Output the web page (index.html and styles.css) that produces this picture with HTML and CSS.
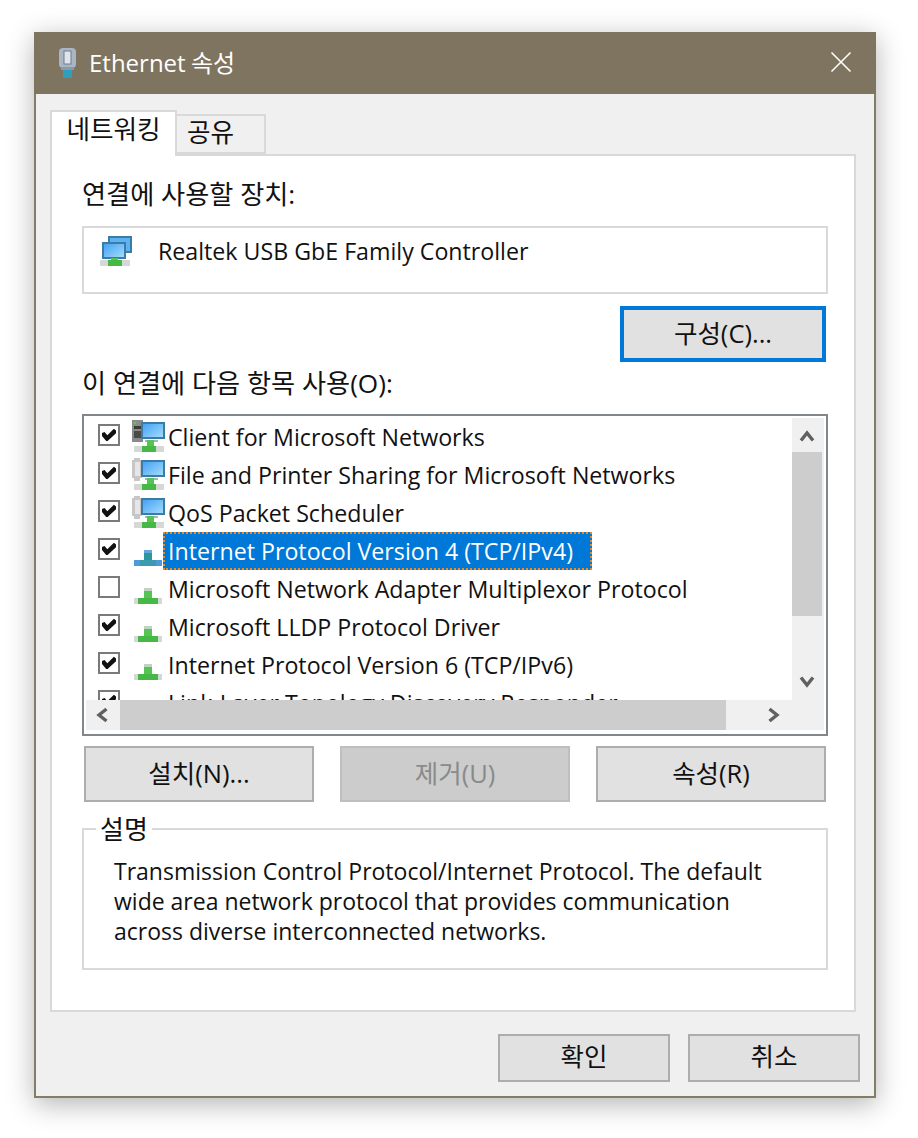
FILE: index.html
```html
<!DOCTYPE html>
<html lang="ko">
<head>
  <meta charset="UTF-8" />
  <title>Ethernet 속성</title>
  <link rel="stylesheet" href="styles.css">
</head>
<body>
  <svg class="defs" width="0" height="0">
    <defs>
      <linearGradient id="screen" x1="0" y1="0" x2="1" y2="1">
        <stop offset="0" stop-color="#3f9ff4"/>
        <stop offset="1" stop-color="#a8defb"/>
      </linearGradient>
      <g id="proto">
        <rect x="2" y="24" width="28" height="6" fill="#d6d8d6"/>
        <rect x="6" y="24" width="20" height="6" fill="#45b845"/>
        <rect x="12" y="14" width="8" height="10" fill="#55c455"/>
        <rect x="12" y="14" width="8" height="3" fill="#c3d3c3"/>
      </g>
      <g id="monitor">
        <rect x="10" y="1" width="22" height="15" fill="url(#screen)" stroke="#3a7ca5" stroke-width="2"/>
        <rect x="13" y="18" width="13" height="2" fill="#a9b4bb"/>
        <rect x="2" y="24" width="30" height="6" fill="#d6d8d6"/>
        <rect x="10" y="24" width="14" height="6" fill="#45b845"/>
        <rect x="15" y="18" width="7" height="6" fill="#55c455"/>
      </g>
      <g id="gear">
        <path d="M2 -2h6v2h2v18H8v3H2v-3H0V0h2z" fill="#c6c6c6"/>
        <path d="M3 2h5v14H3z" fill="#e6e6e6"/>
      </g>
      <g id="pc">
        <rect x="0" y="-2" width="11" height="22" fill="#8a8a8a"/>
        <rect x="2" y="0" width="2" height="2" fill="#52d052"/>
        <rect x="2" y="4" width="7" height="3" fill="#3a3a3a"/>
        <rect x="2" y="9" width="7" height="7" fill="#4a4a4a"/>
      </g>
    </defs>
  </svg>

  <div class="window">
    <div class="titlebar">
      <svg class="title-icon" width="17" height="30" viewBox="0 0 17 30">
        <rect x="0" y="0" width="17" height="20" rx="4" fill="#aab6c6"/>
        <rect x="5" y="3" width="7" height="13" fill="#dfe5ea" stroke="#6f7c8c" stroke-width="1"/>
        <rect x="2" y="19" width="13" height="3" fill="#8e99a6"/>
        <rect x="4" y="22" width="9" height="8" fill="#2f9fc0"/>
      </svg>
      <span class="title-text">Ethernet 속성</span>
      <svg class="close-icon" width="20" height="20" viewBox="0 0 20 20">
        <path d="M0.5 0.5L19.5 19.5M19.5 0.5L0.5 19.5" stroke="#ffffff" stroke-width="1.6" fill="none"/>
      </svg>
    </div>

    <div class="content">
      <div class="tabs">
        <div class="tab tab-active">네트워킹</div>
        <div class="tab">공유</div>
      </div>

      <div class="panel">
        <div class="label label-device">연결에 사용할 장치:</div>
        <div class="device-box">
          <svg class="device-icon" width="32" height="30" viewBox="0 0 32 30">
            <rect x="9" y="1" width="22" height="15" fill="#5fb2f2" stroke="#3a7ca5" stroke-width="2"/>
            <rect x="3" y="7" width="22" height="15" fill="url(#screen)" stroke="#3a7ca5" stroke-width="2"/>
            <rect x="0" y="24" width="30" height="6" fill="#d6d8d6"/>
            <rect x="8" y="24" width="14" height="6" fill="#45b845"/>
            <rect x="11" y="22" width="7" height="2" fill="#55c455"/>
          </svg>
          <span>Realtek USB GbE Family Controller</span>
        </div>

        <div class="config-row">
          <button class="btn btn-config">구성(C)...</button>
        </div>

        <div class="label label-items">이 연결에 다음 항목 사용(O):</div>

        <div class="listbox">
          <div class="list-main">
            <ul class="list-items">
              <li class="item">
                <span class="check on"></span>
                <svg class="item-icon" width="32" height="30" viewBox="0 0 32 30"><use href="#pc"/><use href="#monitor"/></svg>
                <span class="item-text">Client for Microsoft Networks</span>
              </li>
              <li class="item">
                <span class="check on"></span>
                <svg class="item-icon" width="32" height="30" viewBox="0 0 32 30"><use href="#gear"/><use href="#monitor"/></svg>
                <span class="item-text">File and Printer Sharing for Microsoft Networks</span>
              </li>
              <li class="item">
                <span class="check on"></span>
                <svg class="item-icon" width="32" height="30" viewBox="0 0 32 30"><use href="#gear"/><use href="#monitor"/></svg>
                <span class="item-text">QoS Packet Scheduler</span>
              </li>
              <li class="item">
                <span class="check on"></span>
                <svg class="item-icon" width="32" height="30" viewBox="0 0 32 30">
                  <rect x="2" y="24" width="28" height="6" fill="#3d9bb0"/>
                  <rect x="2" y="24" width="6" height="6" fill="#4f9ad8"/>
                  <rect x="24" y="24" width="6" height="6" fill="#4f9ad8"/>
                  <rect x="12" y="14" width="8" height="10" fill="#2c95a0"/>
                  <rect x="12" y="14" width="8" height="3" fill="#62a8d8"/>
                </svg>
                <span class="item-text selected">Internet Protocol Version 4 (TCP/IPv4)</span>
              </li>
              <li class="item">
                <span class="check"></span>
                <svg class="item-icon" width="32" height="30" viewBox="0 0 32 30"><use href="#proto"/></svg>
                <span class="item-text">Microsoft Network Adapter Multiplexor Protocol</span>
              </li>
              <li class="item">
                <span class="check on"></span>
                <svg class="item-icon" width="32" height="30" viewBox="0 0 32 30"><use href="#proto"/></svg>
                <span class="item-text">Microsoft LLDP Protocol Driver</span>
              </li>
              <li class="item">
                <span class="check on"></span>
                <svg class="item-icon" width="32" height="30" viewBox="0 0 32 30"><use href="#proto"/></svg>
                <span class="item-text">Internet Protocol Version 6 (TCP/IPv6)</span>
              </li>
              <li class="item">
                <span class="check on"></span>
                <svg class="item-icon" width="32" height="30" viewBox="0 0 32 30"><use href="#proto"/></svg>
                <span class="item-text">Link-Layer Topology Discovery Responder</span>
              </li>
            </ul>
            <div class="vscroll">
              <svg class="arrow arrow-up" width="14" height="12" viewBox="0 0 14 12"><path d="M1 10.5L7 3l6 7.5" fill="none" stroke="#606060" stroke-width="3.4"/></svg>
              <div class="vthumb"></div>
              <svg class="arrow arrow-down" width="14" height="12" viewBox="0 0 14 12"><path d="M1 1.5L7 9l6-7.5" fill="none" stroke="#606060" stroke-width="3.4"/></svg>
            </div>
          </div>
          <div class="hscroll">
            <svg class="arrow-left" width="12" height="14" viewBox="0 0 12 14"><path d="M10.5 1L3 7l7.5 6" fill="none" stroke="#606060" stroke-width="3.4"/></svg>
            <div class="hthumb"></div>
            <svg class="arrow-right" width="12" height="14" viewBox="0 0 12 14"><path d="M1.5 1L9 7l-7.5 6" fill="none" stroke="#606060" stroke-width="3.4"/></svg>
          </div>
        </div>

        <div class="btn-row">
          <button class="btn">설치(N)...</button>
          <button class="btn btn-disabled">제거(U)</button>
          <button class="btn">속성(R)</button>
        </div>

        <fieldset class="desc">
          <legend>설명</legend>
          <p>Transmission Control Protocol/Internet Protocol. The default wide area network protocol that provides communication across diverse interconnected networks.</p>
        </fieldset>
      </div>

      <div class="footer">
        <button class="btn btn-footer">확인</button>
        <button class="btn btn-footer">취소</button>
      </div>
    </div>
  </div>
</body>
</html>
```

FILE: styles.css
```css
* {
  box-sizing: border-box;
}
html, body {
  height: 100%;
}
body {
  margin: 0;
  padding: 32px 42px 40px 34px;
  background: #ffffff;
  font-family: "Open Sans", "Noto Sans CJK KR", sans-serif;
  font-size: 23.2px;
  color: #111111;
  overflow: hidden;
}
svg {
  overflow: visible;
}
.defs {
  display: block;
  height: 0;
}
.window {
  width: 842px;
  height: 1066px;
  border: 2px solid #857c68;
  border-top: 0;
  background: #f0f0f0;
  box-shadow: 0 6px 26px rgba(0, 0, 0, 0.3);
}
.titlebar {
  display: flex;
  align-items: center;
  height: 62px;
  margin: 0 -2px;
  padding: 0 25px 0 25px;
  background: #7f745f;
  color: #ffffff;
}
.title-icon {
  margin-right: 13px;
}
.title-text {
  flex: 1;
  font-size: 24px;
  word-spacing: -1px;
  line-height: 1;
}
.close-icon {
  display: block;
  margin-top: -2px;
}
.content {
  padding: 16px 18px 0 14px;
}
.tabs {
  display: flex;
  align-items: flex-end;
  height: 44px;
  position: relative;
  z-index: 1;
}
.tab {
  width: 89px;
  height: 40px;
  padding-left: 10px;
  border: 2px solid #d9d9d9;
  border-left: 0;
  background: #f0f0f0;
  font-size: 25.6px;
  line-height: 34px;
}
.tab-active {
  width: 127px;
  height: 46px;
  padding-left: 0;
  border: 2px solid #d9d9d9;
  border-bottom: 0;
  background: #ffffff;
  text-align: center;
  line-height: 36px;
  margin-bottom: -2px;
}
.panel {
  height: 858px;
  padding: 0 26px 0 30px;
  background: #ffffff;
  border: 2px solid #d9d9d9;
}
.label {
  font-size: 26.2px;
  line-height: 32px;
  white-space: nowrap;
}
.label-device {
  padding-top: 22px;
  height: 70px;
}
.device-box {
  display: flex;
  align-items: center;
  width: 746px;
  height: 68px;
  margin-bottom: 12px;
  padding: 0 0 18px 16px;
  border: 2px solid #d9d9d9;
}
.device-icon {
  margin-right: 26px;
}
.config-row {
  display: flex;
  justify-content: flex-end;
  height: 56px;
  padding-right: 2px;
}
.btn {
  height: 56px;
  width: 230px;
  border: 2px solid #adadad;
  background: #e1e1e1;
  font-family: inherit;
  font-size: 25.5px;
  color: #111111;
  padding: 0 0 6px;
}
.btn-config {
  width: 206px;
  padding-bottom: 6px;
  border: 4px solid #0078d7;
}
.btn-disabled {
  background: #cccccc;
  border-color: #bfbfbf;
  color: #8a8a8a;
}
.label-items {
  padding-top: 5px;
  height: 52px;
}
.listbox {
  width: 746px;
  height: 322px;
  border: 2px solid #82878b;
  padding: 2px;
}
.list-main {
  display: flex;
  height: 282px;
}
.list-items {
  flex: 1;
  margin: 0;
  padding: 0;
  list-style: none;
  overflow: hidden;
}
.item {
  display: flex;
  align-items: center;
  height: 38px;
  padding-left: 12px;
}
.check {
  flex: none;
  position: relative;
  width: 22px;
  height: 22px;
  border: 2px solid #7a7a7a;
  background: #ffffff;
  margin-right: 12px;
  margin-top: -4px;
}
.check.on::after {
  content: "";
  position: absolute;
  left: 2px;
  top: 2px;
  width: 14px;
  height: 13px;
  background: #111111;
  clip-path: polygon(0 38%, 18% 30%, 38% 55%, 85% 5%, 100% 20%, 100% 40%, 40% 100%, 30% 100%, 0 62%);
}
.item-icon {
  flex: none;
  margin-right: 2px;
}
.item-text {
  white-space: nowrap;
  padding: 0 2px;
  margin-left: 0;
  line-height: 38px;
}
.selected {
  margin-left: -3px;
  padding: 0 19px 0 5px;
  background: #0078d7;
  color: #ffffff;
  outline: 2px dotted #f08a1d;
  outline-offset: -2px;
}
.vscroll {
  flex: none;
  display: flex;
  flex-direction: column;
  align-items: center;
  width: 32px;
  padding-right: 2px;
  background: #f0f0f0;
}
.arrow-up {
  margin: 12px 0 10px;
}
.arrow-down {
  margin: auto 0 12px;
}
.vthumb {
  width: 30px;
  height: 164px;
  background: #cdcdcd;
}
.hscroll {
  display: flex;
  align-items: center;
  height: 30px;
  background: #f0f0f0;
}
.arrow-left {
  margin: 0 12px 0 10px;
}
.arrow-right {
  margin-left: 42px;
}
.hthumb {
  width: 606px;
  height: 30px;
  background: #cdcdcd;
}
.btn-row {
  display: flex;
  gap: 26px;
  margin-top: 10px;
  padding-left: 2px;
}
.desc {
  width: 746px;
  height: 156px;
  margin: 12px 0 0;
  padding: 12px 30px 0;
  border: 2px solid #d9d9d9;
}
.desc legend {
  padding: 0 4px;
  margin-left: -18px;
  font-size: 26px;
  line-height: 30px;
}
.desc p {
  margin: 0;
  font-size: 23px;
  line-height: 30px;
}
.footer {
  display: flex;
  justify-content: flex-end;
  gap: 18px;
  margin: 22px -4px 0 0;
}
.btn-footer {
  width: 172px;
  height: 48px;
  padding-bottom: 8px;
}
```
